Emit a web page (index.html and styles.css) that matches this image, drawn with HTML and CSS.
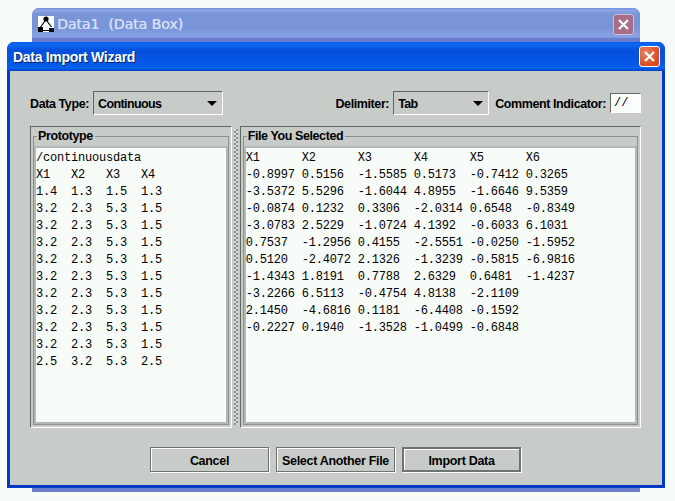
FILE: index.html
```html
<!DOCTYPE html>
<html lang="en">
<head>
    <meta charset="UTF-8">
    <meta name="viewport" content="width=device-width, initial-scale=1.0">
    <title>Data Import Wizard</title>
    <link rel="stylesheet" href="styles.css">
</head>
<body>

<div class="window back-window">
    <div class="titlebar back-titlebar">
        <svg class="app-icon" width="16" height="16" viewBox="0 0 16 16">
            <rect width="16" height="16" fill="#fff"/>
            <circle cx="8" cy="3" r="2.6" fill="#000"/>
            <path d="M7 5 2.500 11M9 5l4.500 6" stroke="#000" stroke-width="1.200" fill="none"/>
            <rect x="0" y="11" width="5" height="5" fill="#000"/>
            <rect x="11" y="12" width="5" height="4" fill="#000"/>
            <path d="M4 14.500h9" stroke="#000" stroke-width="1"/>
        </svg>
        <span class="back-title">Data1&nbsp; (Data Box)</span>
        <span class="close-btn back-close">
            <svg width="13" height="13" viewBox="0 0 13 13"><path d="M2 2l9 9M11 2l-9 9" stroke="#fff" stroke-width="2.200"/></svg>
        </span>
    </div>
</div>

<div class="window front-window">
    <div class="titlebar front-titlebar">
        <span class="front-title">Data Import Wizard</span>
        <span class="close-btn front-close">
            <svg width="13" height="13" viewBox="0 0 13 13"><path d="M2 2l9 9M11 2l-9 9" stroke="#fff" stroke-width="2.200"/></svg>
        </span>
    </div>

    <div class="content">
        <div class="options">
            <label class="label">Data Type:</label>
            <div class="combo combo-type"><span>Continuous</span><i class="arrow"></i></div>
            <label class="label label-delim">Delimiter:</label>
            <div class="combo combo-delim"><span>Tab</span><i class="arrow"></i></div>
            <label class="label">Comment Indicator:</label>
            <div class="comment-input">//</div>
        </div>

        <div class="panels">
            <div class="panel panel-left">
                <fieldset>
                    <legend>Prototype</legend>
<pre class="text-left">/continuousdata
X1	X2	X3	X4
1.4	1.3	1.5	1.3
3.2	2.3	5.3	1.5
3.2	2.3	5.3	1.5
3.2	2.3	5.3	1.5
3.2	2.3	5.3	1.5
3.2	2.3	5.3	1.5
3.2	2.3	5.3	1.5
3.2	2.3	5.3	1.5
3.2	2.3	5.3	1.5
3.2	2.3	5.3	1.5
2.5	3.2	5.3	2.5</pre>
                </fieldset>
            </div>
            <div class="splitter"></div>
            <div class="panel panel-right">
                <fieldset>
                    <legend>File You Selected</legend>
<pre class="text-right">X1	X2	X3	X4	X5	X6
-0.8997	0.5156	-1.5585	0.5173	-0.7412	0.3265
-3.5372	5.5296	-1.6044	4.8955	-1.6646	9.5359
-0.0874	0.1232	0.3306	-2.0314	0.6548	-0.8349
-3.0783	2.5229	-1.0724	4.1392	-0.6033	6.1031
0.7537	-1.2956	0.4155	-2.5551	-0.0250	-1.5952
0.5120	-2.4072	2.1326	-1.3239	-0.5815	-6.9816
-1.4343	1.8191	0.7788	2.6329	0.6481	-1.4237
-3.2266	6.5113	-0.4754	4.8138	-2.1109
2.1450	-4.6816	0.1181	-6.4408	-0.1592
-0.2227	0.1940	-1.3528	-1.0499	-0.6848</pre>
                </fieldset>
            </div>
        </div>

        <div class="buttons">
            <button>Cancel</button>
            <button>Select Another File</button>
            <button class="default-btn">Import Data</button>
        </div>
    </div>
</div>

</body>
</html>
```

FILE: styles.css
```css
* {
    box-sizing: border-box;
    margin: 0;
    padding: 0;
}
body {
    background-color: #f8fcf8;
    width: 675px;
    height: 501px;
    overflow: hidden;
    font-family: 'Liberation Sans', sans-serif;
    position: relative;
}
.window {
    position: absolute;
}
.back-window {
    left: 32px;
    top: 8px;
    width: 608px;
    height: 484px;
    background-color: #6c7ccc;
    border-radius: 7px 7px 0 0;
    padding: 0 3px;
}
.titlebar {
    display: flex;
    align-items: center;
    border-radius: 7px 7px 0 0;
}
.back-titlebar {
    height: 30px;
    margin: 0 -3px;
    padding: 2px 6px 0 6px;
    background: linear-gradient(#6f8fe0 0, #8ea6e6 2px, #7b95d8 6px, #7893d8 20px, #86a3e6 28px, #7b95d8 30px);
}
.app-icon {
    margin-right: 3px;
}
.back-title {
    color: #d4def8;
    font-size: 14px;
    flex: 1;
    font-family: 'DejaVu Sans', sans-serif;
    text-shadow: 0.4px 0 0 #d4def8;
}
.close-btn {
    display: flex;
    align-items: center;
    justify-content: center;
    width: 21px;
    height: 21px;
    border-radius: 3px;
    border: 1px solid #fff;
}
.back-close {
    background-color: #a86e88;
    border-color: #c4c0dc;
}
.front-close {
    background: radial-gradient(circle at 30% 30%, #e8825c, #d84c24 70%);
}
.front-window {
    left: 7px;
    top: 42px;
    width: 658px;
    height: 446px;
    background-color: #0a3ccc;
    border-radius: 7px 7px 0 0;
    border: solid #0038c8;
    border-width: 0 3px 3px 3px;
}
.front-titlebar {
    height: 29px;
    margin: 0 -3px;
    padding: 0 5px 0 6px;
    background: linear-gradient(#0a5ce8 0, #0c68f0 3px, #0450dc 8px, #0458e8 22px, #0a64f0 26px, #0340c4 29px);
}
.front-title {
    flex: 1;
    color: #fff;
    font-size: 14px;
    font-weight: bold;
    text-shadow: 1px 1px 0 #02246c;
    letter-spacing: -0.3px;
}
.content {
    background-color: #c8ccc8;
    height: 414px;
    padding: 20px 21px 0 20px;
}
.options {
    display: flex;
    align-items: center;
    height: 24px;
}
.label {
    font-size: 12.5px;
    letter-spacing: -0.4px;
    font-weight: bold;
    color: #000;
    margin-right: 4px;
    padding-top: 2px;
}
.label-delim {
    margin-left: auto;
}
.combo {
    display: flex;
    align-items: center;
    justify-content: space-between;
    height: 24px;
    padding: 1px 4px 0;
    font-size: 12.5px;
    letter-spacing: -0.6px;
    font-weight: bold;
    border: 1px solid;
    border-color: #606860 #fff #fff #606860;
}
.combo-type {
    width: 130px;
}
.combo-delim {
    width: 96px;
    margin-right: 6px;
}
.arrow {
    width: 0;
    height: 0;
    margin-right: 1px;
    border-left: 5px solid transparent;
    border-right: 5px solid transparent;
    border-top: 5px solid #000;
}
.comment-input {
    width: 31px;
    height: 20px;
    background-color: #fcfefc;
    border: 1px solid;
    border-color: #606860 #fff #fff #606860;
    font-family: 'Liberation Mono', monospace;
    font-size: 12px;
    line-height: 18px;
    padding-left: 3px;
}
.panels {
    display: flex;
    height: 302px;
    margin-top: 11px;
}
.panel {
    height: 302px;
    border: 1px solid;
    border-color: #606860 #fff #fff #606860;
    padding: 2px;
}
.panel-left {
    width: 202px;
}
.panel-right {
    width: 402px;
}
.splitter {
    width: 4px;
    margin: 3px 2px;
    background: repeating-conic-gradient(#8c908c 0 25%, #dce0dc 0 50%) 0 0 / 4px 4px;
}
fieldset {
    height: 296px;
    border: 1px solid #8c908c;
    padding: 0 2px;
    display: block;
}
legend {
    font-size: 12.5px;
    letter-spacing: -0.4px;
    font-weight: bold;
    margin: 0 0 -2px 1px;
    padding: 0 2px 0 1px;
    line-height: 14px;
}
pre {
    background-color: #f8fcf8;
    box-shadow: 0 0 0 2px #b4b8b4;
    font-family: 'Liberation Mono', monospace;
    font-size: 12px;
    letter-spacing: -0.2px;
    line-height: 17px;
    color: #000;
    height: 274px;
    margin-top: 7px;
    padding-top: 2px;
    white-space: pre;
    overflow: hidden;
}
.text-left {
    tab-size: 5;
}
.text-right {
    tab-size: 8;
}
.buttons {
    display: flex;
    gap: 7px;
    margin-top: 19px;
    padding-left: 120px;
}
button {
    width: 119px;
    height: 25px;
    padding-top: 2px;
    background-color: #c8ccc8;
    font-family: 'Liberation Sans', sans-serif;
    font-size: 12.5px;
    letter-spacing: -0.3px;
    font-weight: bold;
    color: #000;
    border: 1px solid #707470;
    box-shadow: 1px 1px 0 #fff, inset 1px 1px 0 #fff;
}
.default-btn {
    border-width: 2px;
}
```
